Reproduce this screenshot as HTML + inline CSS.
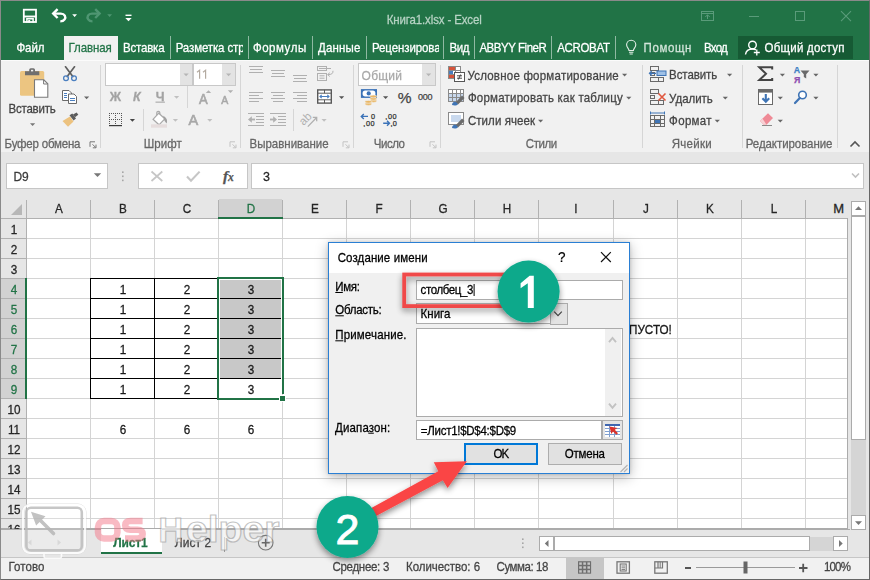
<!DOCTYPE html>
<html><head><meta charset="utf-8">
<style>
*{box-sizing:border-box;margin:0;padding:0}
html,body{width:870px;height:580px;overflow:hidden;background:#e6e6e6}
body{font-family:"Liberation Sans",sans-serif;font-size:12px;color:#444;position:relative}
.a{position:absolute}
.t{position:absolute;white-space:nowrap;line-height:1;-webkit-text-stroke:0.25px}
#frame{left:0;top:0;width:870px;height:580px;border:1px solid #8a8a8a;border-right-color:#666;border-bottom-color:#666;z-index:99;pointer-events:none}
#title{left:0;top:0;width:870px;height:60px;background:#217346}
#ribbon{left:0;top:60px;width:870px;height:93px;background:#f1f1f1;border-bottom:1px solid #d4d4d4}
#fbar{left:0;top:152px;width:870px;height:46px;background:#e6e6e6}
#grid{left:0;top:198px;width:850px;height:330px;background:#fff;overflow:hidden}
#tabbar{left:0;top:528px;width:870px;height:29px;background:#e6e6e6;border-top:1px solid #ababab}
#status{left:0;top:557px;width:870px;height:23px;background:#f1f1f1;border-top:1px solid #c6c6c6}
.tab{color:#fff;font-size:14px;top:41px;letter-spacing:-0.2px}
.gl{color:#444;font-size:13px;transform:scaleX(.9);-webkit-text-stroke:0.3px}
.rl{color:#444;font-size:13px}
.sep{width:1px;background:#d8d8d8}
</style></head><body>
<div class="a" id="title"></div>
<div class="a" id="ribbon"></div>
<div class="a" id="fbar"></div>
<div class="a" id="grid"></div>
<div class="a" id="tabbar"></div>
<div class="a" id="status"></div>
<svg class="a" style="left:0;top:0" width="870" height="60">
<g fill="none" stroke="#fff"><rect x="23.8" y="9.7" width="12.2" height="12.3" stroke-width="1.8"/><path d="M23.5 16.5H36.3" stroke-width="1.9"/><path d="M26.9 22.5V18.7H33.1V22.5" stroke-width="1.5"/></g><rect x="28.2" y="20" width="2" height="2.6" fill="#fff"/>
<g fill="none" stroke="#fff" stroke-width="2.4" ><path d="M53.5 13.6H60.8C64.8 13.6 66.2 17 64.6 19.4C63.6 20.9 62.2 21.4 60.3 21.4"/><path d="M57.6 9.2L53.2 13.6L57.6 18" stroke-linejoin="miter"/></g>
<polygon points="72.2,14.2 77,14.2 74.6,16.9" fill="#fff"/>
<g fill="none" stroke="#4f9672" stroke-width="2.4"><path d="M99.3 13.6H92C88 13.6 86.6 17 88.2 19.4C89.2 20.9 90.6 21.4 92.5 21.4"/><path d="M95.2 9.2L99.6 13.6L95.2 18"/></g>
<polygon points="107.2,14.2 112,14.2 109.6,16.9" fill="#4f9672"/>
<rect x="125.5" y="14.6" width="6" height="1.4" fill="#fff"/><polygon points="125.3,18 131.7,18 128.5,21.2" fill="#fff"/>
<g fill="none" stroke="#5a9b7a" stroke-width="1"><rect x="701.5" y="11.5" width="12" height="9"/><path d="M701.5 13.5H713.5"/><path d="M707.5 19V14.8M705.3 17L707.5 14.8L709.7 17"/></g>
<rect x="749" y="16" width="10" height="1" fill="#5a9b7a"/>
<rect x="795.5" y="11.5" width="9" height="9" fill="none" stroke="#5a9b7a"/>
<path d="M841 11.2L851 21.2M851 11.2L841 21.2" stroke="#5a9b7a" stroke-width="1.1" fill="none"/>
</svg>
<div class="t" style="left:386.7px;top:14.7px;font-size:11.5px;color:#b7d3c4;letter-spacing:-0.14px;transform:scaleY(1.06);transform-origin:0 84.65%;">Книга1.xlsx - Excel</div>
<div class="a" style="left:0;top:60px;width:870px;height:1px;background:#fbfbfb"></div>
<div class="a" style="left:64px;top:36px;width:54px;height:24px;background:#f1f1f1"></div>
<div class="a" style="left:738px;top:36px;width:115px;height:23px;background:#165a34"></div>
<div class="a" style="left:170px;top:36px;width:1px;height:23px;background:#8fb9a2"></div>
<div class="a" style="left:248px;top:36px;width:1px;height:23px;background:#8fb9a2"></div>
<div class="a" style="left:312px;top:36px;width:1px;height:23px;background:#8fb9a2"></div>
<div class="a" style="left:366px;top:36px;width:1px;height:23px;background:#8fb9a2"></div>
<div class="a" style="left:443px;top:36px;width:1px;height:23px;background:#8fb9a2"></div>
<div class="a" style="left:474px;top:36px;width:1px;height:23px;background:#8fb9a2"></div>
<div class="a" style="left:551px;top:36px;width:1px;height:23px;background:#8fb9a2"></div>
<div class="a" style="left:615px;top:36px;width:1px;height:23px;background:#8fb9a2"></div>
<div class="t" style="left:16.4px;top:42.9px;font-size:11.5px;color:#fff;letter-spacing:-0.04px;transform:scaleY(1.06);transform-origin:0 84.65%;">Файл</div>
<div class="t" style="left:68.6px;top:42.9px;font-size:11.5px;color:#217346;letter-spacing:-0.10px;transform:scaleY(1.06);transform-origin:0 84.65%;">Главная</div>
<div class="t" style="left:123.1px;top:42.9px;font-size:11.5px;color:#fff;letter-spacing:-0.21px;transform:scaleY(1.06);transform-origin:0 84.65%;">Вставка</div>
<div class="t" style="left:175.7px;top:42.9px;font-size:11.5px;color:#fff;letter-spacing:-0.13px;width:67.3px;overflow:hidden;transform:scaleY(1.06);transform-origin:0 84.65%;">Разметка стр</div>
<div class="t" style="left:252.9px;top:42.9px;font-size:11.5px;color:#fff;letter-spacing:0.54px;transform:scaleY(1.06);transform-origin:0 84.65%;">Формулы</div>
<div class="t" style="left:318.1px;top:42.9px;font-size:11.5px;color:#fff;letter-spacing:0.16px;transform:scaleY(1.06);transform-origin:0 84.65%;">Данные</div>
<div class="t" style="left:372.0px;top:42.9px;font-size:11.5px;color:#fff;letter-spacing:-0.10px;width:67.3px;overflow:hidden;transform:scaleY(1.06);transform-origin:0 84.65%;">Рецензирова</div>
<div class="t" style="left:449.6px;top:42.9px;font-size:11.5px;color:#fff;letter-spacing:-0.53px;transform:scaleY(1.06);transform-origin:0 84.65%;">Вид</div>
<div class="t" style="left:479.4px;top:42.9px;font-size:11.5px;color:#fff;letter-spacing:-0.46px;transform:scaleY(1.06);transform-origin:0 84.65%;">ABBYY FineR</div>
<div class="t" style="left:557.2px;top:42.9px;font-size:11.5px;color:#fff;letter-spacing:-0.33px;transform:scaleY(1.06);transform-origin:0 84.65%;">ACROBAT</div>
<div class="t" style="left:643.5px;top:42.9px;font-size:11.5px;color:#d3e5da;letter-spacing:0.62px;transform:scaleY(1.06);transform-origin:0 84.65%;">Помощн</div>
<div class="t" style="left:703.9px;top:42.9px;font-size:11.5px;color:#fff;letter-spacing:-0.70px;transform:scaleY(1.06);transform-origin:0 84.65%;">Вход</div>
<div class="t" style="left:764.5px;top:42.9px;font-size:11.5px;color:#fff;letter-spacing:0.24px;transform:scaleY(1.06);transform-origin:0 84.65%;">Общий доступ</div>
<svg class="a" style="left:0;top:34px" width="870" height="28"><g fill="none" stroke="#e4efe8" stroke-width="1.1"><path d="M629 16.5C629 14.5 626.6 13.5 626.6 10.8A4.6 4.6 0 0 1 635.8 10.8C635.8 13.5 633.4 14.5 633.4 16.5Z"/><path d="M629 18.3H633.4M629.6 20H632.8"/></g><g fill="none" stroke="#fff" stroke-width="1.4"><circle cx="752.5" cy="11" r="3.8"/><path d="M745.5 20.5C746 16.5 749 15 752.5 15C754 15 755 15.3 756 15.8"/><path d="M756.8 15.5V21.5M753.8 18.5H759.8" stroke-width="1.3"/></g></svg>
<svg class="a" style="left:0;top:0" width="870" height="152"><rect x="100" y="65" width="1" height="83" fill="#d6d6d6" shape-rendering="crispEdges"/><rect x="240" y="65" width="1" height="83" fill="#d6d6d6" shape-rendering="crispEdges"/><rect x="353" y="65" width="1" height="83" fill="#d6d6d6" shape-rendering="crispEdges"/><rect x="440" y="65" width="1" height="83" fill="#d6d6d6" shape-rendering="crispEdges"/><rect x="642" y="65" width="1" height="83" fill="#d6d6d6" shape-rendering="crispEdges"/><rect x="742" y="65" width="1" height="83" fill="#d6d6d6" shape-rendering="crispEdges"/><rect x="837" y="65" width="1" height="83" fill="#d6d6d6" shape-rendering="crispEdges"/><rect x="20" y="71" width="24.2" height="24.7" rx="1.5" fill="#ecc581"/><path d="M25 75.2V71.2H29.2V69.8A1.6 1.6 0 0 1 30.8 68.2H33.4A1.6 1.6 0 0 1 35 69.8V71.2H39.3V75.2Z" fill="#6f6f6f"/><rect x="31" y="69.8" width="2.2" height="1.6" fill="#f1f1f1"/><path d="M34.5 79.8H43.8L47.8 83.8V97.2H34.5Z" fill="#fff" stroke="#7a7a7a" stroke-width="1.1"/><path d="M43.6 79.8V84H47.8" fill="none" stroke="#7a7a7a" stroke-width="1"/><polygon points="30,123.2 35.2,123.2 32.6,126.0" fill="#777"/><g fill="none" stroke-linecap="round"><path d="M65.5 66.8L72.8 76.6M74.5 66.8L67.2 76.6" stroke="#5f5f5f" stroke-width="1.7"/><circle cx="66" cy="78.3" r="2.4" stroke="#4a7fc0" stroke-width="1.3"/><circle cx="74" cy="78.3" r="2.4" stroke="#4a7fc0" stroke-width="1.3"/></g><g stroke="#6a6a6a" stroke-width="1" fill="#fff"><path d="M62.5 90.5H69L71.5 93V100.5H62.5Z"/><path d="M68.5 94H74L76.5 96.5V103.5H68.5Z"/></g><g stroke="#4a7fc0" stroke-width="1"><path d="M64 93.5H67M64 95.5H67M64 97.5H67"/><path d="M70 98.5H75M70 100.5H75"/></g><polygon points="84,96.4 89.2,96.4 86.6,99.2" fill="#666"/><g><path d="M62.5 121L70 116.5L73.5 121.5L68 126.8Z" fill="#ecc27f"/><path d="M69.5 115.3L72.3 113.5L76 118.5L73.6 120.5Z" fill="#5b5b5b"/><path d="M73 114.6L76.6 112.6L78.3 114.8L75 117.2Z" fill="#5b5b5b"/></g><g fill="none" stroke="#777" stroke-width="1"><path d="M90.0 146.8V141.8H95.0"/><path d="M92.5 144.3L95.8 147.60000000000002"/><path d="M96.0 144.60000000000002V147.8H92.8"/></g><g shape-rendering="crispEdges"><rect x="105.5" y="63.5" width="87" height="22" fill="#fff" stroke="#c8c8c8"/><rect x="180" y="64" width="12" height="21" fill="#e3e3e3"/><rect x="193.5" y="63.5" width="42" height="22" fill="#fff" stroke="#c8c8c8"/><rect x="222" y="64" width="13" height="21" fill="#e3e3e3"/></g><polygon points="183.5,73.5 188.7,73.5 186.1,76.3" fill="#b5b5b5"/><polygon points="226,73.5 231.2,73.5 228.6,76.3" fill="#b5b5b5"/><path d="M197 72.3L199.6 70.3V78.8M203 72.3L205.6 70.3V78.8" fill="none" stroke="#b3aaa0" stroke-width="1.2"/><rect x="155.5" y="101.6" width="9.4" height="1.1" fill="#a8a8a8"/><polygon points="174,96 179.2,96 176.6,98.8" fill="#c0c0c0"/><rect x="187" y="86" width="1" height="22" fill="#d6d6d6"/><rect x="143" y="109" width="1" height="22" fill="#d6d6d6"/><rect x="293" y="109" width="1" height="22" fill="#d6d6d6"/><polygon points="205.8,93 211.2,93 208.5,90.2" fill="#b0b0b0"/><polygon points="227.8,90.2 233.2,90.2 230.5,93" fill="#b0b0b0"/><g stroke="#555" stroke-width="1" stroke-dasharray="1 1" shape-rendering="crispEdges"><path d="M109 113.5H122M109 119.5H122M109.5 113V125M115.5 113V125M121.5 113V125"/></g><rect x="109" y="125" width="13" height="1.2" fill="#3a3a3a"/><polygon points="129.8,119 135.0,119 132.4,121.8" fill="#444"/><g fill="none" stroke="#a8a8a8" stroke-width="1.2"><path d="M153 119.3L158.8 113.2L164.8 118.8L159 124.8Z" fill="#fff"/><path d="M156.8 115.3V112.8A1.5 1.5 0 0 1 159.8 112.8V114.2"/></g><path d="M163.2 115.8C166.5 117.5 167.8 120.5 166.6 123.4C164.8 122 163.6 119.5 163.2 115.8Z" fill="#a0a0a0"/><rect x="151" y="124.3" width="16" height="3.4" fill="#e6dddd"/><polygon points="172.8,119 178.0,119 175.4,121.8" fill="#c0c0c0"/><polygon points="207.2,119 212.39999999999998,119 209.79999999999998,121.8" fill="#c0c0c0"/><g fill="none" stroke="#c3c3c3" stroke-width="1"><path d="M230.0 146.8V141.8H235.0"/><path d="M232.5 144.3L235.8 147.60000000000002"/><path d="M236.0 144.60000000000002V147.8H232.8"/></g><rect x="249" y="66" width="14" height="1" fill="#b0b0b0" shape-rendering="crispEdges"/><rect x="250" y="69" width="12" height="1" fill="#b0b0b0" shape-rendering="crispEdges"/><rect x="249" y="72" width="14" height="1" fill="#b0b0b0" shape-rendering="crispEdges"/><rect x="271" y="70" width="14" height="1" fill="#b0b0b0" shape-rendering="crispEdges"/><rect x="272" y="73" width="12" height="1" fill="#b0b0b0" shape-rendering="crispEdges"/><rect x="271" y="76" width="14" height="1" fill="#b0b0b0" shape-rendering="crispEdges"/><rect x="293" y="75" width="14" height="1" fill="#b0b0b0" shape-rendering="crispEdges"/><rect x="294" y="78" width="12" height="1" fill="#b0b0b0" shape-rendering="crispEdges"/><rect x="293" y="81" width="14" height="1" fill="#b0b0b0" shape-rendering="crispEdges"/><rect x="249" y="92" width="14" height="1" fill="#b0b0b0" shape-rendering="crispEdges"/><rect x="249" y="95" width="10" height="1" fill="#b0b0b0" shape-rendering="crispEdges"/><rect x="249" y="98" width="14" height="1" fill="#b0b0b0" shape-rendering="crispEdges"/><rect x="249" y="101" width="10" height="1" fill="#b0b0b0" shape-rendering="crispEdges"/><rect x="271" y="92" width="14" height="1" fill="#b0b0b0" shape-rendering="crispEdges"/><rect x="273" y="95" width="10" height="1" fill="#b0b0b0" shape-rendering="crispEdges"/><rect x="271" y="98" width="14" height="1" fill="#b0b0b0" shape-rendering="crispEdges"/><rect x="273" y="101" width="10" height="1" fill="#b0b0b0" shape-rendering="crispEdges"/><rect x="293" y="92" width="14" height="1" fill="#b0b0b0" shape-rendering="crispEdges"/><rect x="297" y="95" width="10" height="1" fill="#b0b0b0" shape-rendering="crispEdges"/><rect x="293" y="98" width="14" height="1" fill="#b0b0b0" shape-rendering="crispEdges"/><rect x="297" y="101" width="10" height="1" fill="#b0b0b0" shape-rendering="crispEdges"/><g fill="none" stroke="#b0b0b0" stroke-width="1"><rect x="317.5" y="66.5" width="9" height="4"/><path d="M319 68.5H331"/><rect x="317.5" y="73.5" width="9" height="7"/><path d="M319.5 75.8H324.5M319.5 78.2H324.5"/><path d="M333 70.8C333 73.8 331.5 74.6 328 74.6M329.8 72.7L327.6 74.6L329.8 76.5"/></g><rect x="317.7" y="89.9" width="13.6" height="13.2" fill="#fff" stroke="#5a5a5a" stroke-width="1.4"/><g fill="none" stroke="#5a5a5a" stroke-width="1"><path d="M317.7 93.2H331.3M317.7 99.8H331.3M324.5 89.9V93.2M324.5 99.8V103.1"/></g><path d="M320 96.5H329M321.7 94.9L320 96.5L321.7 98.1M327.3 94.9L329 96.5L327.3 98.1" stroke="#4a7fc0" stroke-width="1.1" fill="none"/><polygon points="339,96.3 344.2,96.3 341.6,99.1" fill="#555"/><rect x="248" y="113" width="16" height="1" fill="#b0b0b0" shape-rendering="crispEdges"/><rect x="256" y="116" width="8" height="1" fill="#b0b0b0" shape-rendering="crispEdges"/><rect x="256" y="119" width="8" height="1" fill="#b0b0b0" shape-rendering="crispEdges"/><rect x="256" y="122" width="8" height="1" fill="#b0b0b0" shape-rendering="crispEdges"/><rect x="248" y="125" width="16" height="1" fill="#b0b0b0" shape-rendering="crispEdges"/><path d="M250 119.5H255" stroke="#b0b0b0" stroke-width="1.8" fill="none"/><polygon points="248,119.5 251.8,116.2 251.8,122.8" fill="#b0b0b0"/><rect x="270" y="113" width="16" height="1" fill="#b0b0b0" shape-rendering="crispEdges"/><rect x="278" y="116" width="8" height="1" fill="#b0b0b0" shape-rendering="crispEdges"/><rect x="278" y="119" width="8" height="1" fill="#b0b0b0" shape-rendering="crispEdges"/><rect x="278" y="122" width="8" height="1" fill="#b0b0b0" shape-rendering="crispEdges"/><rect x="270" y="125" width="16" height="1" fill="#b0b0b0" shape-rendering="crispEdges"/><path d="M270 119.5H275" stroke="#b0b0b0" stroke-width="1.8" fill="none"/><polygon points="277,119.5 273.2,116.2 273.2,122.8" fill="#b0b0b0"/><g transform="rotate(-45 306.5 119.5)"><text x="299.8" y="122" font-family="Liberation Sans" font-size="11.5" fill="#b0b0b0">ab</text></g><path d="M307.8 126.6L316.4 117.8M312.8 117.4L316.7 117.4L316.7 121.3" stroke="#b0b0b0" stroke-width="1.3" fill="none"/><polygon points="321.5,119 326.7,119 324.1,121.8" fill="#c0c0c0"/><g fill="none" stroke="#c3c3c3" stroke-width="1"><path d="M343.0 146.8V141.8H348.0"/><path d="M345.5 144.3L348.8 147.60000000000002"/><path d="M349.0 144.60000000000002V147.8H345.8"/></g><g shape-rendering="crispEdges"><rect x="358.5" y="63.5" width="77" height="22" fill="#fff" stroke="#c8c8c8"/><rect x="422" y="64" width="13" height="21" fill="#e3e3e3"/></g><polygon points="426,73.5 431.2,73.5 428.6,76.3" fill="#b5b5b5"/><rect x="360.9" y="89.1" width="16.1" height="8.8" fill="#3a72b8"/><rect x="362.6" y="90.6" width="12.8" height="5.8" rx="2.6" fill="#fff"/><circle cx="368.7" cy="93.4" r="2.1" fill="#3a72b8"/><g fill="#eab765" stroke="#f1f1f1" stroke-width="0.6"><ellipse cx="373.4" cy="101" rx="3.5" ry="1.4"/><ellipse cx="373.4" cy="98.8" rx="3.5" ry="1.4"/><ellipse cx="373.4" cy="96.5" rx="3.5" ry="1.4"/><ellipse cx="368.4" cy="104" rx="3.5" ry="1.4"/><ellipse cx="368.4" cy="101.8" rx="3.5" ry="1.4"/></g><polygon points="383,96.3 388.2,96.3 385.6,99.1" fill="#555"/><path d="M361.3 116.4H368M363.8 113.9L361.3 116.4L363.8 118.9" stroke="#3a72b8" stroke-width="1.4" fill="none"/><path d="M383.2 123.3H389.5M387 120.8L389.5 123.3L387 125.8" stroke="#3a72b8" stroke-width="1.4" fill="none"/><g fill="none" stroke="#c3c3c3" stroke-width="1"><path d="M430.0 146.8V141.8H435.0"/><path d="M432.5 144.3L435.8 147.60000000000002"/><path d="M436.0 144.60000000000002V147.8H432.8"/></g><g shape-rendering="crispEdges"><rect x="448.5" y="66.5" width="12" height="12" fill="#fff" stroke="#8a8a8a"/><rect x="449" y="67" width="6" height="4" fill="#d6543b"/><rect x="449" y="71" width="4" height="4" fill="#4a7fc0"/><rect x="449" y="75" width="7" height="3" fill="#d6543b"/><path d="M455.5 66.5V78M448.5 70.5H460.5M448.5 74.5H460.5" stroke="#8a8a8a" fill="none"/><rect x="454.5" y="72.5" width="10" height="9" fill="#fff" stroke="#555"/></g><path d="M457 75.8H462M457 78.2H462M460.6 74.5L458.4 79.5" stroke="#333" stroke-width="0.9" fill="none"/><g shape-rendering="crispEdges"><rect x="448.5" y="89.5" width="15" height="12" fill="#fff" stroke="#8a8a8a"/><rect x="449" y="93" width="14" height="8" fill="#c9d9ee"/><path d="M448.5 93.5H463.5M448.5 97.5H463.5M452.5 89.5V101.5M456.5 89.5V101.5M460.5 89.5V101.5" stroke="#8a8a8a" fill="none"/></g><path d="M455.5 102.5L462 95.5L464.5 98L458 104.5Z" fill="#6b6b6b"/><path d="M452 105C452 102.5 454 101 456 102L458 104C457 105.8 454 105.8 452 105Z" fill="#3f74b5"/><g shape-rendering="crispEdges"><rect x="448.5" y="112.5" width="15" height="12" fill="#fff" stroke="#8a8a8a"/><rect x="451" y="115" width="10" height="7" fill="#c9d9ee"/></g><path d="M455.5 125.5L462 118.5L464.5 121L458 127.5Z" fill="#6b6b6b"/><path d="M452 128C452 125.5 454 124 456 125L458 127C457 128.8 454 128.8 452 128Z" fill="#3f74b5"/><polygon points="622,73.8 627.2,73.8 624.6,76.6" fill="#666"/><polygon points="626.2,96.8 631.4000000000001,96.8 628.8000000000001,99.6" fill="#666"/><polygon points="538,119.8 543.2,119.8 540.6,122.6" fill="#666"/><g fill="none" stroke="#6a6a6a" stroke-width="1" shape-rendering="crispEdges"><rect x="650.5" y="66.5" width="8" height="4"/><rect x="650.5" y="77.5" width="8" height="4"/><rect x="658.5" y="77.5" width="5" height="4"/><rect x="650.5" y="72.5" width="4" height="3"/></g><rect x="657" y="71" width="9" height="4.5" fill="#9ec0e6" stroke="#3f74b5" stroke-width="1"/><path d="M649.5 73.3H656M651.7 71.1L649.5 73.3L651.7 75.5" stroke="#3f74b5" stroke-width="1.3" fill="none"/><g fill="none" stroke="#6a6a6a" stroke-width="1" shape-rendering="crispEdges"><rect x="650.5" y="89.5" width="8" height="4"/><rect x="650.5" y="100.5" width="8" height="4"/><rect x="658.5" y="100.5" width="5" height="4"/><rect x="650.5" y="95.5" width="4" height="3"/></g><path d="M658.5 93.5L665.5 100.5M665.5 93.5L658.5 100.5" stroke="#e0573e" stroke-width="1.6" fill="none"/><g fill="none" stroke="#6a6a6a" stroke-width="1" shape-rendering="crispEdges"><rect x="650.5" y="115.5" width="14" height="11"/><path d="M650.5 119.5H664.5M650.5 123.5H664.5M654.5 115.5V126.5M660.5 115.5V126.5"/></g><rect x="655" y="120" width="5" height="3" fill="#3f74b5"/><path d="M650.5 113H664.5M650.5 111.5V114.5M664.5 111.5V114.5" stroke="#3f74b5" stroke-width="1" fill="none"/><polygon points="727,73.8 732.2,73.8 729.6,76.6" fill="#666"/><polygon points="722.7,96.8 727.9000000000001,96.8 725.3000000000001,99.6" fill="#666"/><polygon points="714.7,119.8 719.9000000000001,119.8 717.3000000000001,122.6" fill="#666"/><path d="M772.2 69.5V67.3H759.3L766 73.7L759.3 80.1H772.2V77.9" fill="none" stroke="#444" stroke-width="2"/><polygon points="779.8,73.8 785.0,73.8 782.4,76.6" fill="#666"/><path d="M800.5 70.5H809.5L806.2 74.2V78.5L803.8 77V74.2Z" fill="#6a6a6a"/><polygon points="813.3,73.8 818.5,73.8 815.9,76.6" fill="#666"/><rect x="758.5" y="89.5" width="14" height="15" fill="#fff" stroke="#6a6a6a" stroke-width="1" shape-rendering="crispEdges"/><rect x="759" y="90" width="13" height="2.6" fill="#6a6a6a"/><path d="M765.8 94V101.5M762.4 98.2L765.8 101.8L769.2 98.2" stroke="#3f74b5" stroke-width="2.1" fill="none"/><polygon points="777.7,96.8 782.9000000000001,96.8 780.3000000000001,99.6" fill="#666"/><circle cx="802.5" cy="95" r="3.8" fill="#fff" stroke="#3f74b5" stroke-width="1.6"/><path d="M799.8 98L795 103" stroke="#3f74b5" stroke-width="2.2" stroke-linecap="round"/><polygon points="813.3,96.8 818.5,96.8 815.9,99.6" fill="#666"/><path d="M760 121L768 113.2L773 118L766.5 124.8H763.5Z" fill="#ef8a96"/><path d="M760 121L763.5 124.8H766.5L762.5 118.6Z" fill="#f7d0d4"/><rect x="762" y="125" width="10" height="1" fill="#8a8a8a"/><polygon points="777.7,119.8 782.9000000000001,119.8 780.3000000000001,122.6" fill="#666"/><path d="M850.5 146.5L855 142L859.5 146.5" fill="none" stroke="#555" stroke-width="1.6"/></svg>
<div class="t" style="left:8.5px;top:103.9px;font-size:11.5px;color:#444;letter-spacing:-0.21px;transform:scaleY(1.06);transform-origin:0 84.65%;">Вставить</div>
<div class="t" style="left:4.6px;top:138.8px;font-size:11.5px;color:#666;letter-spacing:-0.21px;transform:scaleY(1.06);transform-origin:0 84.65%;">Буфер обмена</div>
<div class="t" style="left:143.7px;top:138.8px;font-size:11.5px;color:#666;letter-spacing:0.09px;transform:scaleY(1.06);transform-origin:0 84.65%;">Шрифт</div>
<div class="t" style="left:249.6px;top:138.8px;font-size:11.5px;color:#666;letter-spacing:-0.02px;transform:scaleY(1.06);transform-origin:0 84.65%;">Выравнивание</div>
<div class="t" style="left:373.7px;top:138.8px;font-size:11.5px;color:#666;letter-spacing:-0.45px;transform:scaleY(1.06);transform-origin:0 84.65%;">Число</div>
<div class="t" style="left:525.8px;top:138.8px;font-size:11.5px;color:#666;letter-spacing:-0.45px;transform:scaleY(1.06);transform-origin:0 84.65%;">Стили</div>
<div class="t" style="left:671.7px;top:138.8px;font-size:11.5px;color:#666;letter-spacing:0.27px;transform:scaleY(1.06);transform-origin:0 84.65%;">Ячейки</div>
<div class="t" style="left:745.7px;top:138.8px;font-size:11.5px;color:#666;letter-spacing:-0.06px;transform:scaleY(1.06);transform-origin:0 84.65%;">Редактирование</div>
<div class="t" style="left:361.6px;top:69.5px;font-size:12px;color:#a9a9a9;letter-spacing:0.20px;transform:scaleY(1.06);transform-origin:0 84.65%;">Общий</div>
<div class="t" style="left:109.7px;top:91.3px;font-size:12.5px;color:#a3a3a3;letter-spacing:1.10px;font-weight:bold;transform:scaleY(1.06);transform-origin:0 84.65%;">Ж</div>
<div class="t" style="left:133.0px;top:91.3px;font-size:12.5px;color:#a3a3a3;letter-spacing:0.42px;font-weight:bold;font-style:italic;transform:scaleY(1.06);transform-origin:0 84.65%;">К</div>
<div class="t" style="left:155.8px;top:90.9px;font-size:12.5px;color:#a3a3a3;letter-spacing:-0.18px;font-weight:bold;transform:scaleY(1.06);transform-origin:0 84.65%;">Ч</div>
<div class="t" style="left:198.9px;top:92.7px;font-size:13px;color:#a8a8a8;letter-spacing:1.43px;transform:scaleY(1.06);transform-origin:0 84.65%;-webkit-text-stroke:0.6px #a8a8a8;">A</div>
<div class="t" style="left:221.3px;top:94.8px;font-size:10.5px;color:#a8a8a8;letter-spacing:1.70px;transform:scaleY(1.06);transform-origin:0 84.65%;-webkit-text-stroke:0.5px #a8a8a8;">A</div>
<div class="t" style="left:188.5px;top:113.3px;font-size:14.5px;color:#a8a8a8;letter-spacing:-0.17px;transform:scaleY(1.06);transform-origin:0 84.65%;-webkit-text-stroke:0.6px #a8a8a8;">A</div>
<div class="t" style="left:397.8px;top:89.8px;font-size:15.5px;color:#444;letter-spacing:-1.68px;">%</div>
<div class="t" style="left:418.0px;top:92.7px;font-size:9px;color:#444;letter-spacing:-0.24px;">000</div>
<div class="t" style="left:371.0px;top:113.0px;font-size:7.3px;color:#333;letter-spacing:0.14px;">0</div><div class="t" style="left:363.3px;top:120.3px;font-size:7.3px;color:#333;letter-spacing:0.58px;">,00</div>
<div class="t" style="left:385.3px;top:113.0px;font-size:7.3px;color:#333;letter-spacing:0.58px;">,00</div><div class="t" style="left:390.4px;top:120.3px;font-size:7.3px;color:#333;letter-spacing:0.36px;">,0</div>
<div class="t" style="left:467.4px;top:70.5px;font-size:11.5px;color:#444;letter-spacing:0.23px;transform:scaleY(1.06);transform-origin:0 84.65%;">Условное форматирование</div>
<div class="t" style="left:467.9px;top:93.4px;font-size:11.5px;color:#444;letter-spacing:0.22px;transform:scaleY(1.06);transform-origin:0 84.65%;">Форматировать как таблицу</div>
<div class="t" style="left:467.9px;top:116.4px;font-size:11.5px;color:#444;letter-spacing:0.07px;transform:scaleY(1.06);transform-origin:0 84.65%;">Стили ячеек</div>
<div class="t" style="left:669.1px;top:70.2px;font-size:11.5px;color:#444;letter-spacing:-0.08px;transform:scaleY(1.06);transform-origin:0 84.65%;">Вставить</div>
<div class="t" style="left:669.1px;top:93.5px;font-size:11.5px;color:#444;letter-spacing:-0.04px;transform:scaleY(1.06);transform-origin:0 84.65%;">Удалить</div>
<div class="t" style="left:669.1px;top:116.0px;font-size:11.5px;color:#444;letter-spacing:0.33px;transform:scaleY(1.06);transform-origin:0 84.65%;">Формат</div>
<div class="t" style="left:793.8px;top:65.9px;font-size:8.8px;color:#3f7fc4;font-weight:bold;">A</div><div class="t" style="left:794.0px;top:75.5px;font-size:8.8px;color:#8e4fb0;font-weight:bold;">Я</div>
<div class="a" style="left:6px;top:163px;width:102px;height:26px;background:#fff;border:1px solid #c6c6c6"></div>
<div class="a" style="left:138px;top:163px;width:110px;height:26px;background:#fff;border:1px solid #c6c6c6"></div>
<div class="a" style="left:251px;top:163px;width:613px;height:26px;background:#fff;border:1px solid #c6c6c6"></div>
<svg class="a" style="left:0;top:0" width="870" height="200"><polygon points="93.8,173.2 101.2,173.2 97.5,177" fill="#777"/><rect x="122" y="171.39999999999998" width="1.6" height="1.6" fill="#a6a6a6"/><rect x="122" y="175.5" width="1.6" height="1.6" fill="#a6a6a6"/><rect x="122" y="179.6" width="1.6" height="1.6" fill="#a6a6a6"/><path d="M151.5 171.5L162.3 181M162.3 171.5L151.5 181" stroke="#c6c6c6" stroke-width="1.7" fill="none"/><path d="M187 176.5L191 180.8L199.6 171.6" stroke="#c6c6c6" stroke-width="2.1" fill="none"/><path d="M852 173.5L855.5 177L859 173.5" stroke="#c0c0c0" stroke-width="1.6" fill="none"/></svg>
<div class="t" style="left:13.5px;top:171.4px;font-size:12px;color:#3a3a3a;letter-spacing:-0.07px;transform:scaleY(1.06);transform-origin:0 84.65%;">D9</div>
<div class="t" style="left:263.0px;top:171.3px;font-size:12.5px;color:#262626;transform:scaleY(1.06);transform-origin:0 84.65%;">3</div>
<div class="t" style="left:223px;top:167.5px;font-family:'Liberation Serif',serif;font-style:italic;font-size:15.5px;color:#555;font-weight:bold;letter-spacing:-0.3px">f<span style="font-size:11.5px">x</span></div>
<div class="a" style="left:0;top:0;width:848px;height:529px;overflow:hidden"><svg class="a" style="left:0;top:198px" width="850" height="330" shape-rendering="crispEdges">
<rect x="0" y="0" width="850" height="20" fill="#e6e6e6"/>
<rect x="0" y="20" width="26" height="310" fill="#e6e6e6"/>
<rect x="219" y="1" width="63" height="19" fill="#d2d2d2"/>
<rect x="0" y="80" width="26" height="120" fill="#d2d2d2"/>
<rect x="90" y="20" width="1" height="310" fill="#d4d4d4"/>
<rect x="154" y="20" width="1" height="310" fill="#d4d4d4"/>
<rect x="218" y="20" width="1" height="310" fill="#d4d4d4"/>
<rect x="282" y="20" width="1" height="310" fill="#d4d4d4"/>
<rect x="346" y="20" width="1" height="310" fill="#d4d4d4"/>
<rect x="410" y="20" width="1" height="310" fill="#d4d4d4"/>
<rect x="474" y="20" width="1" height="310" fill="#d4d4d4"/>
<rect x="538" y="20" width="1" height="310" fill="#d4d4d4"/>
<rect x="613" y="20" width="1" height="310" fill="#d4d4d4"/>
<rect x="677" y="20" width="1" height="310" fill="#d4d4d4"/>
<rect x="741" y="20" width="1" height="310" fill="#d4d4d4"/>
<rect x="805" y="20" width="1" height="310" fill="#d4d4d4"/>
<rect x="27" y="40" width="823" height="1" fill="#d4d4d4"/>
<rect x="27" y="60" width="823" height="1" fill="#d4d4d4"/>
<rect x="27" y="80" width="823" height="1" fill="#d4d4d4"/>
<rect x="27" y="100" width="823" height="1" fill="#d4d4d4"/>
<rect x="27" y="120" width="823" height="1" fill="#d4d4d4"/>
<rect x="27" y="140" width="823" height="1" fill="#d4d4d4"/>
<rect x="27" y="160" width="823" height="1" fill="#d4d4d4"/>
<rect x="27" y="180" width="823" height="1" fill="#d4d4d4"/>
<rect x="27" y="200" width="823" height="1" fill="#d4d4d4"/>
<rect x="27" y="220" width="823" height="1" fill="#d4d4d4"/>
<rect x="27" y="240" width="823" height="1" fill="#d4d4d4"/>
<rect x="27" y="260" width="823" height="1" fill="#d4d4d4"/>
<rect x="27" y="280" width="823" height="1" fill="#d4d4d4"/>
<rect x="27" y="300" width="823" height="1" fill="#d4d4d4"/>
<rect x="27" y="320" width="823" height="1" fill="#d4d4d4"/>
<rect x="27" y="340" width="823" height="1" fill="#d4d4d4"/>
<rect x="26" y="2" width="1" height="18" fill="#b1b1b1"/>
<rect x="90" y="2" width="1" height="18" fill="#b1b1b1"/>
<rect x="154" y="2" width="1" height="18" fill="#b1b1b1"/>
<rect x="218" y="2" width="1" height="18" fill="#b1b1b1"/>
<rect x="282" y="2" width="1" height="18" fill="#b1b1b1"/>
<rect x="346" y="2" width="1" height="18" fill="#b1b1b1"/>
<rect x="410" y="2" width="1" height="18" fill="#b1b1b1"/>
<rect x="474" y="2" width="1" height="18" fill="#b1b1b1"/>
<rect x="538" y="2" width="1" height="18" fill="#b1b1b1"/>
<rect x="613" y="2" width="1" height="18" fill="#b1b1b1"/>
<rect x="677" y="2" width="1" height="18" fill="#b1b1b1"/>
<rect x="741" y="2" width="1" height="18" fill="#b1b1b1"/>
<rect x="805" y="2" width="1" height="18" fill="#b1b1b1"/>
<rect x="0" y="40" width="26" height="1" fill="#b1b1b1"/>
<rect x="0" y="60" width="26" height="1" fill="#b1b1b1"/>
<rect x="0" y="80" width="26" height="1" fill="#b1b1b1"/>
<rect x="0" y="100" width="26" height="1" fill="#b1b1b1"/>
<rect x="0" y="120" width="26" height="1" fill="#b1b1b1"/>
<rect x="0" y="140" width="26" height="1" fill="#b1b1b1"/>
<rect x="0" y="160" width="26" height="1" fill="#b1b1b1"/>
<rect x="0" y="180" width="26" height="1" fill="#b1b1b1"/>
<rect x="0" y="200" width="26" height="1" fill="#b1b1b1"/>
<rect x="0" y="220" width="26" height="1" fill="#b1b1b1"/>
<rect x="0" y="240" width="26" height="1" fill="#b1b1b1"/>
<rect x="0" y="260" width="26" height="1" fill="#b1b1b1"/>
<rect x="0" y="280" width="26" height="1" fill="#b1b1b1"/>
<rect x="0" y="300" width="26" height="1" fill="#b1b1b1"/>
<rect x="0" y="320" width="26" height="1" fill="#b1b1b1"/>
<rect x="0" y="340" width="26" height="1" fill="#b1b1b1"/>
<rect x="0" y="20" width="850" height="1" fill="#b1b1b1"/>
<rect x="26" y="20" width="1" height="310" fill="#b1b1b1"/>
<polygon points="11,17 22,17 22,6" fill="#b7b7b7" shape-rendering="auto"/>
<rect x="90" y="80" width="1" height="121" fill="#000"/>
<rect x="154" y="80" width="1" height="121" fill="#000"/>
<rect x="90" y="80" width="193" height="1" fill="#000"/>
<rect x="90" y="100" width="193" height="1" fill="#000"/>
<rect x="90" y="120" width="193" height="1" fill="#000"/>
<rect x="90" y="140" width="193" height="1" fill="#000"/>
<rect x="90" y="160" width="193" height="1" fill="#000"/>
<rect x="90" y="180" width="193" height="1" fill="#000"/>
<rect x="90" y="200" width="193" height="1" fill="#000"/>
<rect x="219" y="81" width="63" height="19" fill="#c8c8c8"/>
<rect x="219" y="101" width="63" height="19" fill="#c8c8c8"/>
<rect x="219" y="121" width="63" height="19" fill="#c8c8c8"/>
<rect x="219" y="141" width="63" height="19" fill="#c8c8c8"/>
<rect x="219" y="161" width="63" height="19" fill="#c8c8c8"/>
<rect x="218" y="19" width="65" height="2" fill="#217346"/>
<rect x="25" y="80" width="2" height="121" fill="#217346"/>
<rect x="219.5" y="81.5" width="62" height="118" fill="none" stroke="#fff" stroke-width="1"/>
<rect x="217" y="79" width="67" height="2" fill="#217346"/>
<rect x="217" y="200" width="62" height="2" fill="#217346"/>
<rect x="217" y="79" width="2" height="123" fill="#217346"/>
<rect x="282" y="79" width="2" height="117" fill="#217346"/>
<rect x="279" y="197" width="7" height="7" fill="#fff"/>
<rect x="280" y="198" width="5" height="5" fill="#217346"/>
</svg>
<div class="t gl" style="left:38.7px;width:40px;text-align:center;top:202px;color:#262626">A</div>
<div class="t gl" style="left:102.7px;width:40px;text-align:center;top:202px;color:#262626">B</div>
<div class="t gl" style="left:166.7px;width:40px;text-align:center;top:202px;color:#262626">C</div>
<div class="t gl" style="left:230.7px;width:40px;text-align:center;top:202px;color:#217346">D</div>
<div class="t gl" style="left:294.7px;width:40px;text-align:center;top:202px;color:#262626">E</div>
<div class="t gl" style="left:358.7px;width:40px;text-align:center;top:202px;color:#262626">F</div>
<div class="t gl" style="left:422.7px;width:40px;text-align:center;top:202px;color:#262626">G</div>
<div class="t gl" style="left:486.7px;width:40px;text-align:center;top:202px;color:#262626">H</div>
<div class="t gl" style="left:556.2px;width:40px;text-align:center;top:202px;color:#262626">I</div>
<div class="t gl" style="left:625.7px;width:40px;text-align:center;top:202px;color:#262626">J</div>
<div class="t gl" style="left:689.7px;width:40px;text-align:center;top:202px;color:#262626">K</div>
<div class="t gl" style="left:753.7px;width:40px;text-align:center;top:202px;color:#262626">L</div>
<div class="t gl" style="left:818.7px;width:40px;text-align:center;top:202px;color:#262626;transform:none">M</div>
<div class="t gl" style="left:1px;width:26px;text-align:center;top:223px;color:#262626">1</div>
<div class="t gl" style="left:1px;width:26px;text-align:center;top:243px;color:#262626">2</div>
<div class="t gl" style="left:1px;width:26px;text-align:center;top:263px;color:#262626">3</div>
<div class="t gl" style="left:1px;width:26px;text-align:center;top:283px;color:#217346">4</div>
<div class="t gl" style="left:1px;width:26px;text-align:center;top:303px;color:#217346">5</div>
<div class="t gl" style="left:1px;width:26px;text-align:center;top:323px;color:#217346">6</div>
<div class="t gl" style="left:1px;width:26px;text-align:center;top:343px;color:#217346">7</div>
<div class="t gl" style="left:1px;width:26px;text-align:center;top:363px;color:#217346">8</div>
<div class="t gl" style="left:1px;width:26px;text-align:center;top:383px;color:#217346">9</div>
<div class="t gl" style="left:1px;width:26px;text-align:center;top:403px;color:#262626">10</div>
<div class="t gl" style="left:1px;width:26px;text-align:center;top:423px;color:#262626">11</div>
<div class="t gl" style="left:1px;width:26px;text-align:center;top:443px;color:#262626">12</div>
<div class="t gl" style="left:1px;width:26px;text-align:center;top:463px;color:#262626">13</div>
<div class="t gl" style="left:1px;width:26px;text-align:center;top:483px;color:#262626">14</div>
<div class="t gl" style="left:1px;width:26px;text-align:center;top:503px;color:#262626">15</div>
<div class="t gl" style="left:1px;width:26px;text-align:center;top:523px;color:#262626">16</div>
<div class="t gl" style="left:102.6px;width:40px;text-align:center;top:283px;color:#1a1a1a">1</div>
<div class="t gl" style="left:166.6px;width:40px;text-align:center;top:283px;color:#1a1a1a">2</div>
<div class="t gl" style="left:230.6px;width:40px;text-align:center;top:283px;color:#1a1a1a">3</div>
<div class="t gl" style="left:102.6px;width:40px;text-align:center;top:303px;color:#1a1a1a">1</div>
<div class="t gl" style="left:166.6px;width:40px;text-align:center;top:303px;color:#1a1a1a">2</div>
<div class="t gl" style="left:230.6px;width:40px;text-align:center;top:303px;color:#1a1a1a">3</div>
<div class="t gl" style="left:102.6px;width:40px;text-align:center;top:323px;color:#1a1a1a">1</div>
<div class="t gl" style="left:166.6px;width:40px;text-align:center;top:323px;color:#1a1a1a">2</div>
<div class="t gl" style="left:230.6px;width:40px;text-align:center;top:323px;color:#1a1a1a">3</div>
<div class="t gl" style="left:102.6px;width:40px;text-align:center;top:343px;color:#1a1a1a">1</div>
<div class="t gl" style="left:166.6px;width:40px;text-align:center;top:343px;color:#1a1a1a">2</div>
<div class="t gl" style="left:230.6px;width:40px;text-align:center;top:343px;color:#1a1a1a">3</div>
<div class="t gl" style="left:102.6px;width:40px;text-align:center;top:363px;color:#1a1a1a">1</div>
<div class="t gl" style="left:166.6px;width:40px;text-align:center;top:363px;color:#1a1a1a">2</div>
<div class="t gl" style="left:230.6px;width:40px;text-align:center;top:363px;color:#1a1a1a">3</div>
<div class="t gl" style="left:102.6px;width:40px;text-align:center;top:383px;color:#1a1a1a">1</div>
<div class="t gl" style="left:166.6px;width:40px;text-align:center;top:383px;color:#1a1a1a">2</div>
<div class="t gl" style="left:230.6px;width:40px;text-align:center;top:383px;color:#1a1a1a">3</div>
<div class="t gl" style="left:102.6px;width:40px;text-align:center;top:423px;color:#1a1a1a">6</div>
<div class="t gl" style="left:166.6px;width:40px;text-align:center;top:423px;color:#1a1a1a">6</div>
<div class="t gl" style="left:230.6px;width:40px;text-align:center;top:423px;color:#1a1a1a">6</div>
<div class="t gl" style="left:628.5px;top:323px;color:#1a1a1a;transform-origin:0 50%">ПУСТО!</div></div>
<div class="a" style="left:848px;top:198px;width:21px;height:331px;background:#e6e6e6"></div>
<div class="a" style="left:847px;top:218px;width:1px;height:311px;background:#ababab"></div>
<div class="a" style="left:851px;top:216px;width:15px;height:300px;background:#d5d5d5"></div>
<div class="a" style="left:851px;top:201px;width:15px;height:15px;background:#fff;border:1px solid #ababab"></div>
<div class="a" style="left:851px;top:216px;width:15px;height:224px;background:#fff;border:1px solid #ababab"></div>
<div class="a" style="left:851px;top:515px;width:15px;height:15px;background:#fff;border:1px solid #ababab"></div>
<div class="a" style="left:0;top:529px;width:850px;height:1px;background:#ababab"></div>
<div class="a" style="left:101px;top:529px;width:61px;height:25px;background:#fff;border-bottom:2px solid #217346"></div>
<div class="a" style="left:224px;top:537px;width:1px;height:15px;background:#9a9a9a"></div>
<svg class="a" style="left:0;top:0" width="870" height="580"><polygon points="855,210 862,210 858.5,206.3" fill="#777"/><polygon points="855,521.3 862,521.3 858.5,525" fill="#777"/><circle cx="265.7" cy="542.7" r="7.3" fill="none" stroke="#777" stroke-width="1.1"/><path d="M261.7 542.7H269.7M265.7 538.7V546.7" stroke="#666" stroke-width="1.6"/><rect x="522" y="538.4000000000001" width="1.6" height="1.6" fill="#a6a6a6"/><rect x="522" y="542.4000000000001" width="1.6" height="1.6" fill="#a6a6a6"/><rect x="522" y="546.5" width="1.6" height="1.6" fill="#a6a6a6"/><g shape-rendering="crispEdges"><rect x="539.5" y="536.5" width="308" height="14" fill="#d5d5d5" stroke="none"/><rect x="539.5" y="536.5" width="14" height="14" fill="#fff" stroke="#ababab"/><rect x="554.5" y="536.5" width="255" height="14" fill="#fff" stroke="#ababab"/><rect x="833.5" y="536.5" width="14" height="14" fill="#fff" stroke="#ababab"/></g><polygon points="548.5,540 548.5,547 544.8,543.5" fill="#777"/><polygon points="839,540 839,547 842.7,543.5" fill="#777"/></svg>
<div class="t" style="left:113.3px;top:537.2px;font-size:12px;color:#217346;letter-spacing:-0.14px;font-weight:bold;transform:scaleY(1.06);transform-origin:0 84.65%;">Лист1</div>
<div class="t" style="left:174.7px;top:537.2px;font-size:12px;color:#444;letter-spacing:0.10px;transform:scaleY(1.06);transform-origin:0 84.65%;">Лист 2</div>
<div class="a" style="left:566px;top:558px;width:38px;height:21px;background:#c6c6c6"></div>
<svg class="a" style="left:0;top:0" width="870" height="580"><rect x="578" y="561.2" width="13.1" height="12.5" fill="#6e6e6e"/><rect x="579.2" y="562.4" width="2.6" height="2.4" fill="#c6c6c6"/><rect x="579.2" y="566.3" width="2.6" height="2.4" fill="#c6c6c6"/><rect x="579.2" y="570.2" width="2.6" height="2.4" fill="#c6c6c6"/><rect x="583.3" y="562.4" width="2.6" height="2.4" fill="#c6c6c6"/><rect x="583.3" y="566.3" width="2.6" height="2.4" fill="#c6c6c6"/><rect x="583.3" y="570.2" width="2.6" height="2.4" fill="#c6c6c6"/><rect x="587.4" y="562.4" width="2.6" height="2.4" fill="#c6c6c6"/><rect x="587.4" y="566.3" width="2.6" height="2.4" fill="#c6c6c6"/><rect x="587.4" y="570.2" width="2.6" height="2.4" fill="#c6c6c6"/><g fill="none" stroke="#777" stroke-width="1.3"><rect x="617" y="561.8" width="12.4" height="11.4"/><rect x="620.2" y="564" width="6" height="7" stroke-width="1.1"/><path d="M621.5 566H625M621.5 567.8H625M621.5 569.5H625" stroke-width="0.9"/></g><g fill="none" stroke="#777" stroke-width="1.3"><rect x="654.8" y="561.8" width="12.5" height="11.4"/><path d="M658 561.8V568H662.5V561.8M654.8 568H662.5" stroke-width="1.2"/><path d="M660.2 561.8V568" stroke-width="1"/></g><rect x="685" y="567" width="6" height="2" fill="#555"/><rect x="695.5" y="567" width="99" height="1" fill="#9a9a9a" shape-rendering="crispEdges"/><rect x="743.5" y="561.5" width="4" height="12" fill="#666"/><path d="M799 568H807.5M803.2 563.8V572.2" stroke="#555" stroke-width="1.8"/></svg>
<div class="t" style="left:8.5px;top:562.2px;font-size:11.5px;color:#444;letter-spacing:0.08px;transform:scaleY(1.06);transform-origin:0 84.65%;">Готово</div>
<div class="t" style="left:332.5px;top:562.2px;font-size:11.5px;color:#444;letter-spacing:-0.30px;transform:scaleY(1.06);transform-origin:0 84.65%;">Среднее: 3</div>
<div class="t" style="left:406.0px;top:562.2px;font-size:11.5px;color:#444;letter-spacing:-0.04px;transform:scaleY(1.06);transform-origin:0 84.65%;">Количество: 6</div>
<div class="t" style="left:496.5px;top:562.2px;font-size:11.5px;color:#444;letter-spacing:-0.42px;transform:scaleY(1.06);transform-origin:0 84.65%;">Сумма: 18</div>
<div class="t" style="left:824.0px;top:562.2px;font-size:11.5px;color:#444;letter-spacing:-0.85px;transform:scaleY(1.06);transform-origin:0 84.65%;">100%</div>
<div class="a" style="left:328px;top:242px;width:302px;height:232px;background:#f0f0f0;border:1px solid #2a7fd4;box-shadow:0 3px 12px rgba(0,0,0,0.28),0 0 3px rgba(0,0,0,0.15)"></div>
<div class="a" style="left:329px;top:243px;width:300px;height:30px;background:#fff"></div>
<div class="a" style="left:416px;top:280px;width:207px;height:20px;background:#fff;border:1px solid #ababab"></div>
<div class="a" style="left:416px;top:303px;width:135px;height:21px;background:#fdfdfd;border:1px solid #ababab"></div>
<div class="a" style="left:550px;top:303px;width:18px;height:22px;background:#e3e3e3;border:1px solid #ababab"></div>
<div class="a" style="left:416px;top:328px;width:207px;height:89px;background:#fff;border:1px solid #ababab"></div>
<div class="a" style="left:605px;top:329px;width:16px;height:87px;background:#f0f0f0"></div>
<div class="a" style="left:416px;top:420px;width:186px;height:20px;background:#fff;border:1px solid #ababab"></div>
<div class="a" style="left:602px;top:420px;width:21px;height:20px;background:#e4e4e4;border:1px solid #ababab"></div>
<div class="a" style="left:464px;top:443px;width:74px;height:22px;background:#e1e1e1;border:2px solid #0078d7"></div>
<div class="a" style="left:548px;top:443px;width:74px;height:22px;background:#e1e1e1;border:1px solid #adadad"></div>
<svg class="a" style="left:0;top:0" width="870" height="580"><path d="M601 252.2L610.8 262M610.8 252.2L601 262" stroke="#111" stroke-width="1.2" fill="none"/><path d="M554.2 311.6L558 315.6L561.8 311.6" stroke="#444" stroke-width="1.2" fill="none"/><path d="M609 342.2L612.5 338L616 342.2" stroke="#c2c2c2" stroke-width="1.9" fill="none"/><path d="M609 403.6L612.5 407.8L616 403.6" stroke="#c2c2c2" stroke-width="1.9" fill="none"/><rect x="335.3" y="292" width="7.5" height="1" fill="#000"/><rect x="335.3" y="315.3" width="8.5" height="1" fill="#000"/><rect x="335.3" y="340.3" width="8" height="1" fill="#000"/><rect x="368.3" y="432.7" width="5.5" height="1" fill="#000"/><rect x="473.6" y="284" width="1" height="12" fill="#000"/><g shape-rendering="crispEdges"><rect x="605" y="423.5" width="15" height="13" fill="#fff"/><rect x="605" y="423.5" width="15" height="2.5" fill="#3f66b0"/><path d="M605 428.5H620M605 431.5H620M605 434.5H620M609.5 426V436.5M614.5 426V436.5" stroke="#7f9fd0" stroke-width="1" fill="none"/></g><path d="M609.5 426.5L617.5 428L614.8 429.8L618 433.2L616.3 434.8L613 431.5L611.3 434Z" fill="#d9312b"/><path d="M627.5 465L620.5 472M627.5 468.5L624 472" stroke="#b4b4b4" stroke-width="1.2" fill="none"/></svg>
<div class="t" style="left:337.7px;top:253.0px;font-size:11.5px;color:#000;letter-spacing:0.10px;transform:scaleY(1.06);transform-origin:0 84.65%;">Создание имени</div>
<div class="t" style="left:558.0px;top:251.2px;font-size:13.5px;color:#000;transform:scaleY(1.06);transform-origin:0 84.65%;-webkit-text-stroke:0.2px #000;">?</div>
<div class="t" style="left:335.3px;top:281.9px;font-size:11.5px;color:#000;letter-spacing:-0.35px;transform:scaleY(1.06);transform-origin:0 84.65%;">Имя:</div>
<div class="t" style="left:335.3px;top:305.2px;font-size:11.5px;color:#000;letter-spacing:-0.27px;transform:scaleY(1.06);transform-origin:0 84.65%;">Область:</div>
<div class="t" style="left:335.3px;top:330.2px;font-size:11.5px;color:#000;letter-spacing:0.14px;transform:scaleY(1.06);transform-origin:0 84.65%;">Примечание.</div>
<div class="t" style="left:335.1px;top:422.6px;font-size:11.5px;color:#000;letter-spacing:0.12px;transform:scaleY(1.06);transform-origin:0 84.65%;">Диапазон:</div>
<div class="t" style="left:420.6px;top:285.2px;font-size:11.5px;color:#000;letter-spacing:-0.40px;transform:scaleY(1.06);transform-origin:0 84.65%;">столбец_3</div>
<div class="t" style="left:420.6px;top:309.2px;font-size:11.5px;color:#000;transform:scaleY(1.06);transform-origin:0 84.65%;">Книга</div>
<div class="t" style="left:420.8px;top:425.9px;font-size:11.5px;color:#000;letter-spacing:-0.27px;transform:scaleY(1.06);transform-origin:0 84.65%;">=Лист1!$D$4:$D$9</div>
<div class="t" style="left:493.4px;top:448.6px;font-size:11.5px;color:#000;letter-spacing:-0.96px;transform:scaleY(1.06);transform-origin:0 84.65%;">OK</div>
<div class="t" style="left:564.8px;top:448.6px;font-size:11.5px;color:#000;letter-spacing:-0.21px;transform:scaleY(1.06);transform-origin:0 84.65%;">Отмена</div>
<svg class="a" style="left:0;top:0" width="870" height="580"><defs><filter id="sh" x="-30%" y="-30%" width="160%" height="170%"><feGaussianBlur in="SourceAlpha" stdDeviation="3"/><feOffset dx="0" dy="3"/><feComponentTransfer><feFuncA type="linear" slope="0.45"/></feComponentTransfer><feMerge><feMergeNode/><feMergeNode in="SourceGraphic"/></feMerge></filter></defs><polygon points="31.5,539.5 31.5,545.5 28,542.5" fill="#cfcfcf"/><polygon points="57.5,539.5 57.5,545.5 61,542.5" fill="#cfcfcf"/><g opacity="0.85"><rect x="22" y="504" width="64" height="50" rx="8" fill="none" stroke="#cfcfcf" stroke-width="0.8"/><rect x="23" y="505" width="62" height="48" rx="7" fill="none" stroke="#fff" stroke-width="2"/><rect x="26.4" y="507.8" width="55.4" height="42.6" rx="4.5" fill="rgba(255,255,255,0.22)" stroke="#bdbdbd" stroke-width="2.6"/><path d="M44 553.8V556.5Q44 558 45.5 558H60Q61.5 558 61.5 556.5V553.8" fill="none" stroke="#fff" stroke-width="1.6"/><path d="M53.5 533.5L39.5 519.5" stroke="#b8b8b8" stroke-width="3.6" fill="none" stroke-linecap="round"/><path d="M31 511.7L45.5 516.3L36.1 525.5Z" fill="#b8b8b8"/></g><g fill="none" stroke="rgba(244,118,136,0.5)" stroke-width="6.5" stroke-linejoin="round"><rect x="98" y="521" width="19.4" height="17.5" rx="6"/><path d="M142.6 521H130.5Q125.2 521 125.2 525.3Q125.2 529.7 130.5 529.7H137.5Q142.7 529.7 142.7 534.1Q142.7 538.5 137.5 538.5H125"/></g><g font-family="Liberation Sans" font-weight="bold" fill="rgba(255,255,255,0.62)" stroke="rgba(135,135,135,0.5)" stroke-width="1.2"><text x="158.5" y="541.8" font-size="35" textLength="24.5" lengthAdjust="spacingAndGlyphs">H</text><text x="186" y="541.8" font-size="37.5" textLength="93.5" lengthAdjust="spacingAndGlyphs">elper</text></g><g filter="url(#sh)"><rect x="404.2" y="274.5" width="106" height="31.6" fill="none" stroke="#f04848" stroke-width="3.8"/></g><g filter="url(#sh)"><path d="M466.9 461.3L433.8 462.2L438.3 471.2L358.6 515L363.5 522.8L442.8 480.2L447.6 488Z" fill="#fa4545"/></g><g filter="url(#sh)"><circle cx="528.6" cy="291.6" r="31" fill="#0aa98b"/><circle cx="347.5" cy="526.9" r="31" fill="#0aa98b"/></g><path d="M533.8 275.8V308H527.8V283.3L520.6 288.2V283.2L529.6 275.8Z" fill="#fff"/><text x="347.4" y="543.8" text-anchor="middle" font-family="Liberation Sans" font-size="43" fill="#fff" stroke="#fff" stroke-width="0.9">2</text></svg>
<div class="a" id="frame"></div>
</body></html>
